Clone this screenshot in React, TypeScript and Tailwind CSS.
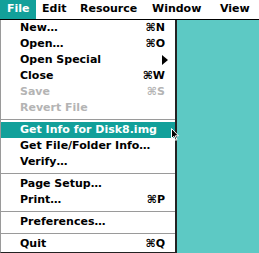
import React from 'react';

type Item =
  | { kind: 'item'; label: string; key?: string; disabled?: boolean; active?: boolean; submenu?: boolean }
  | { kind: 'sep' };

const items: Item[] = [
  { kind: 'item', label: 'New…', key: 'N' },
  { kind: 'item', label: 'Open…', key: 'O' },
  { kind: 'item', label: 'Open Special', submenu: true },
  { kind: 'item', label: 'Close', key: 'W' },
  { kind: 'item', label: 'Save', key: 'S', disabled: true },
  { kind: 'item', label: 'Revert File', disabled: true },
  { kind: 'sep' },
  { kind: 'item', label: 'Get Info for Disk8.img', active: true },
  { kind: 'item', label: 'Get File/Folder Info…' },
  { kind: 'item', label: 'Verify…' },
  { kind: 'sep' },
  { kind: 'item', label: 'Page Setup…' },
  { kind: 'item', label: 'Print…', key: 'P' },
  { kind: 'sep' },
  { kind: 'item', label: 'Preferences…' },
  { kind: 'sep' },
  { kind: 'item', label: 'Quit', key: 'Q' },
];

// mouse pointer resting on the highlighted row
const Cursor = () => (
  <svg width="8" height="13" viewBox="0 0 8 13" className="absolute left-[170px] top-[6px] z-10">
    <path d="M0.5 0.5 L0.5 10.5 L2.8 8.3 L4.6 12.3 L6 11.7 L4.3 7.8 L7.5 7.8 Z" fill="#000" stroke="#fff" strokeWidth="1" />
  </svg>
);

export default function App() {
  return (
    <div
      className="w-[259px] h-[253px] bg-[#5dc9c4] flex flex-col overflow-hidden text-[11px] font-bold"
      style={{ fontFamily: '"DejaVu Sans", sans-serif' }}
    >
      {/* menu bar */}
      <div className="h-[20px] shrink-0 bg-white border-b border-black flex items-center">
        <div className="h-[19px] w-[36px] bg-[#12a09a] text-white flex items-center pl-[7px]">File</div>
        <div className="pl-[6px] w-[40px]">Edit</div>
        <div className="pl-[4px] w-[72px]">Resource</div>
        <div className="pl-[4px] w-[70px]">Window</div>
        <div className="pl-[2px]">View</div>
      </div>

      {/* file menu */}
      <div className="w-[177px] bg-white border-l border-[#9a9a9a] border-r-2 border-r-[#222] border-b border-b-[#222] flex flex-col">
        {items.map((it, i) =>
          it.kind === 'sep' ? (
            <div key={i} className="h-[6px] flex items-center">
              <div className="w-full h-px bg-[#9a9a9a]" />
            </div>
          ) : (
            <div
              key={i}
              className={`relative h-[16px] flex items-center pl-[19px] pr-[10px] ${
                it.active ? 'bg-[#12a09a] text-white' : it.disabled ? 'text-[#b4b4b4]' : 'text-black'
              }`}
            >
              <span className="flex-1 whitespace-nowrap">{it.label}</span>
              {it.key && <span className="whitespace-nowrap">⌘{it.key}</span>}
              {it.submenu && (
                <svg width="6" height="10" viewBox="0 0 6 10" className="mr-[-3px]">
                  <path d="M0 0 L6 5 L0 10 Z" fill="#000" />
                </svg>
              )}
              {it.active && <Cursor />}
            </div>
          )
        )}
      </div>
    </div>
  );
}
